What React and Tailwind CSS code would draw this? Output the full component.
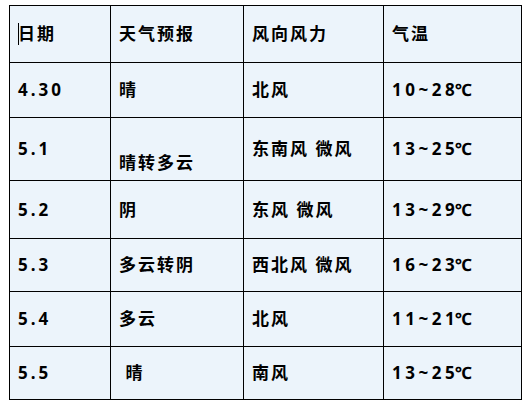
const rows = [
  { date: '4.30', weather: '晴', wind: '北风', temp: '10~28', h: 'h-[55px]' },
  { date: '5.1', weather: '晴转多云', wind: '东南风 微风', temp: '13~25', h: 'h-[63px]', low: true },
  { date: '5.2', weather: '阴', wind: '东风 微风', temp: '13~29', h: 'h-[58px]' },
  { date: '5.3', weather: '多云转阴', wind: '西北风 微风', temp: '16~23', h: 'h-[53px]' },
  { date: '5.4', weather: '多云', wind: '北风', temp: '11~21', h: 'h-[55px]' },
  { date: '5.5', weather: '\u00a0晴', wind: '南风', temp: '13~25', h: 'h-[53px]' },
]

const cell = 'border border-black pl-[8px] pr-1 align-middle'

export default function App() {
  return (
    <div className="min-h-screen bg-white pl-[9px] pt-[5px] font-['Noto_Sans','Noto_Sans_CJK_SC',sans-serif] text-[17px] font-bold tracking-[2px] text-black">
      <table className="w-[512px] table-fixed border-collapse bg-[#ecf4fb]">
        <colgroup>
          <col className="w-[101px]" />
          <col className="w-[133px]" />
          <col className="w-[140px]" />
          <col className="w-[138px]" />
        </colgroup>
        <thead>
          <tr className="h-[57px]">
            <th className={`${cell} relative text-left font-bold`}>
              <span className="absolute left-[8px] top-[17px] h-[22px] w-px bg-black" />
              日期
            </th>
            <th className={`${cell} text-left font-bold`}>天气预报</th>
            <th className={`${cell} text-left font-bold`}>风向风力</th>
            <th className={`${cell} text-left font-bold`}>气温</th>
          </tr>
        </thead>
        <tbody>
          {rows.map((r) => (
            <tr key={r.date} className={r.h}>
              <td className={`${cell} tracking-[3px]`}>{r.date}</td>
              <td className={r.low ? `${cell} !align-bottom pb-[5px]` : cell}>{r.weather}</td>
              <td className={cell}>{r.wind}</td>
              <td className={`${cell} whitespace-nowrap tracking-[3.5px]`}>
                {r.temp.slice(0, -1)}
                <span className="tracking-normal">{r.temp.slice(-1)}℃</span>
              </td>
            </tr>
          ))}
        </tbody>
      </table>
    </div>
  )
}
